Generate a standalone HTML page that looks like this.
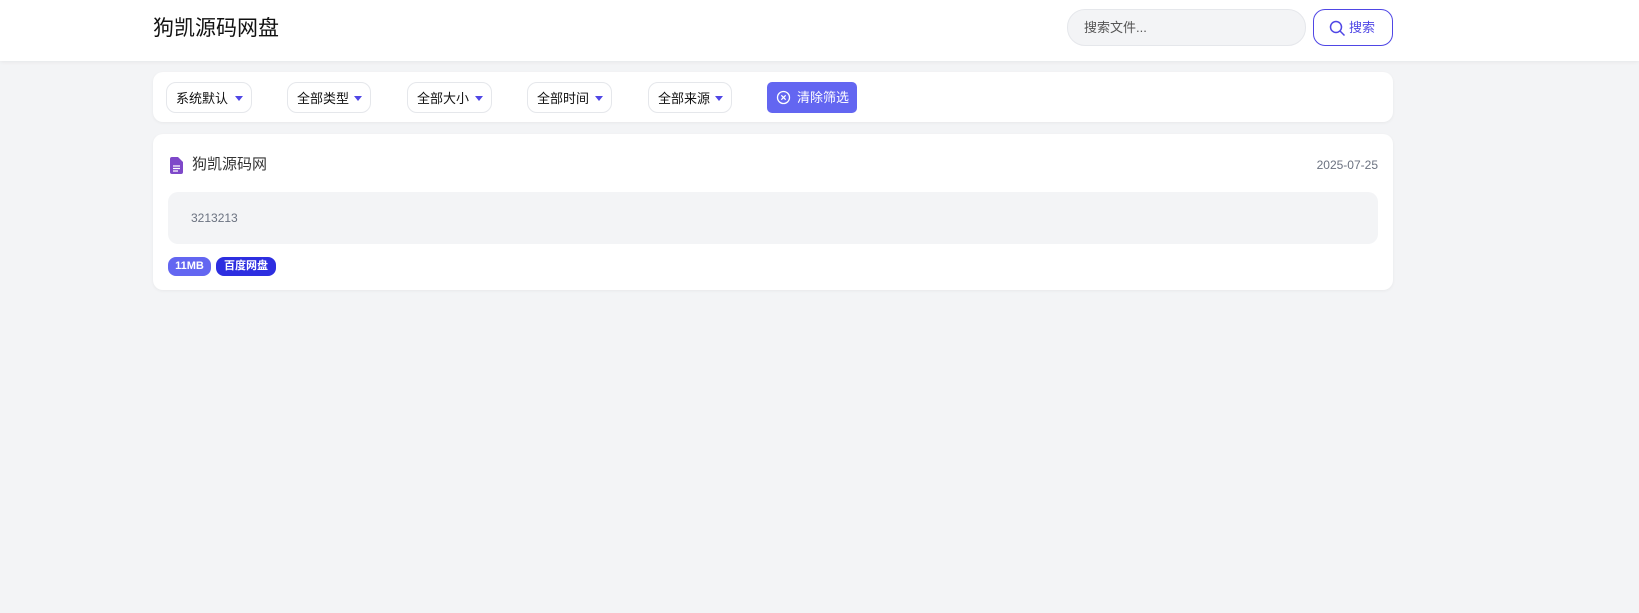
<!DOCTYPE html>
<html><head><meta charset="utf-8"><style>
*{box-sizing:border-box;margin:0;padding:0}
body{width:1639px;height:613px;background:#f3f4f6;font-family:"Liberation Sans","Noto Sans CJK SC",sans-serif;position:relative;overflow:hidden}
.hdr{position:absolute;left:0;top:0;width:1639px;height:61px;background:#fff;box-shadow:0 1px 4px rgba(0,0,0,.06)}
.logo{position:absolute;left:153px;top:14px;font-size:21px;line-height:30px;color:#111}
.search{position:absolute;left:1067px;top:9px;width:239px;height:37px;border:1px solid #e5e7eb;border-radius:18px;background:#f3f4f6;font-size:13px;line-height:35px;color:#555;padding-left:16px}
.sbtn{position:absolute;left:1313px;top:9px;width:80px;height:37px;border:1px solid #4f46e5;border-radius:12px;color:#4f46e5;font-size:13px;line-height:35px;padding-left:35px}
.card{position:absolute;left:153px;width:1240px;background:#fff;border-radius:10px;box-shadow:0 1px 3px rgba(0,0,0,.05)}
.sel{position:absolute;top:10px;height:31px;border:1px solid #e5e7eb;border-radius:10px;font-size:13px;line-height:31px;color:#111;padding-left:9px}
.sel:after{content:"";position:absolute;right:8px;top:13px;border:4px solid transparent;border-top:5px solid #4f46e5}
.clr{position:absolute;left:614px;top:10px;width:90px;height:31px;background:#6366f1;border-radius:5px;color:#fff;font-size:13px;line-height:31px;padding-left:30px}
.tag{position:absolute;top:123px;height:19px;border-radius:8px;color:#fff;font-size:11px;line-height:19px;font-weight:bold;text-align:center}
</style></head><body>
<div class="hdr">
<div class="logo">狗凯源码网盘</div>
<div class="search">搜索文件...</div>
<div class="sbtn"><svg style="position:absolute;left:15px;top:10px" width="17" height="17" viewBox="0 0 17 17"><circle cx="7" cy="7" r="5.5" fill="none" stroke="#4f46e5" stroke-width="1.5"/><path d="M11 11l4.5 4.5" stroke="#4f46e5" stroke-width="1.5"/></svg>搜索</div>
</div>
<div class="card" style="top:72px;height:50px">
<div class="sel" style="left:13px;width:86px">系统默认</div>
<div class="sel" style="left:134px;width:84px">全部类型</div>
<div class="sel" style="left:254px;width:85px">全部大小</div>
<div class="sel" style="left:374px;width:85px">全部时间</div>
<div class="sel" style="left:495px;width:84px">全部来源</div>
<div class="clr"><svg style="position:absolute;left:9px;top:8px" width="15" height="15" viewBox="0 0 15 15"><circle cx="7.5" cy="7.5" r="6" fill="none" stroke="#fff" stroke-width="1.3"/><path d="M5.3 5.3l4.4 4.4M9.7 5.3l-4.4 4.4" stroke="#fff" stroke-width="1.3"/></svg>清除筛选</div>
</div>
<div class="card" style="top:134px;height:156px">
<svg style="position:absolute;left:17px;top:23px" width="13" height="17" viewBox="0 0 13 17"><path d="M0 2a2 2 0 0 1 2-2h6l5 5v10a2 2 0 0 1-2 2H2a2 2 0 0 1-2-2z" fill="#7e48c9"/><path d="M3 9h7M3 11.5h7M3 14h5" stroke="#fff" stroke-width="1.2"/></svg>
<div style="position:absolute;left:39px;top:20px;font-size:15px;line-height:22px;color:#333">狗凯源码网</div>
<div style="position:absolute;right:15px;top:23px;font-size:12px;line-height:16px;color:#6b7280">2025-07-25</div>
<div style="position:absolute;left:15px;top:58px;width:1210px;height:52px;background:#f3f4f6;border-radius:10px;font-size:12px;line-height:52px;color:#6b7280;padding-left:23px">3213213</div>
<div class="tag" style="left:15px;width:43px;background:#6366f1">11MB</div>
<div class="tag" style="left:63px;width:60px;background:#2d2ee0">百度网盘</div>
</div>
</body></html>
